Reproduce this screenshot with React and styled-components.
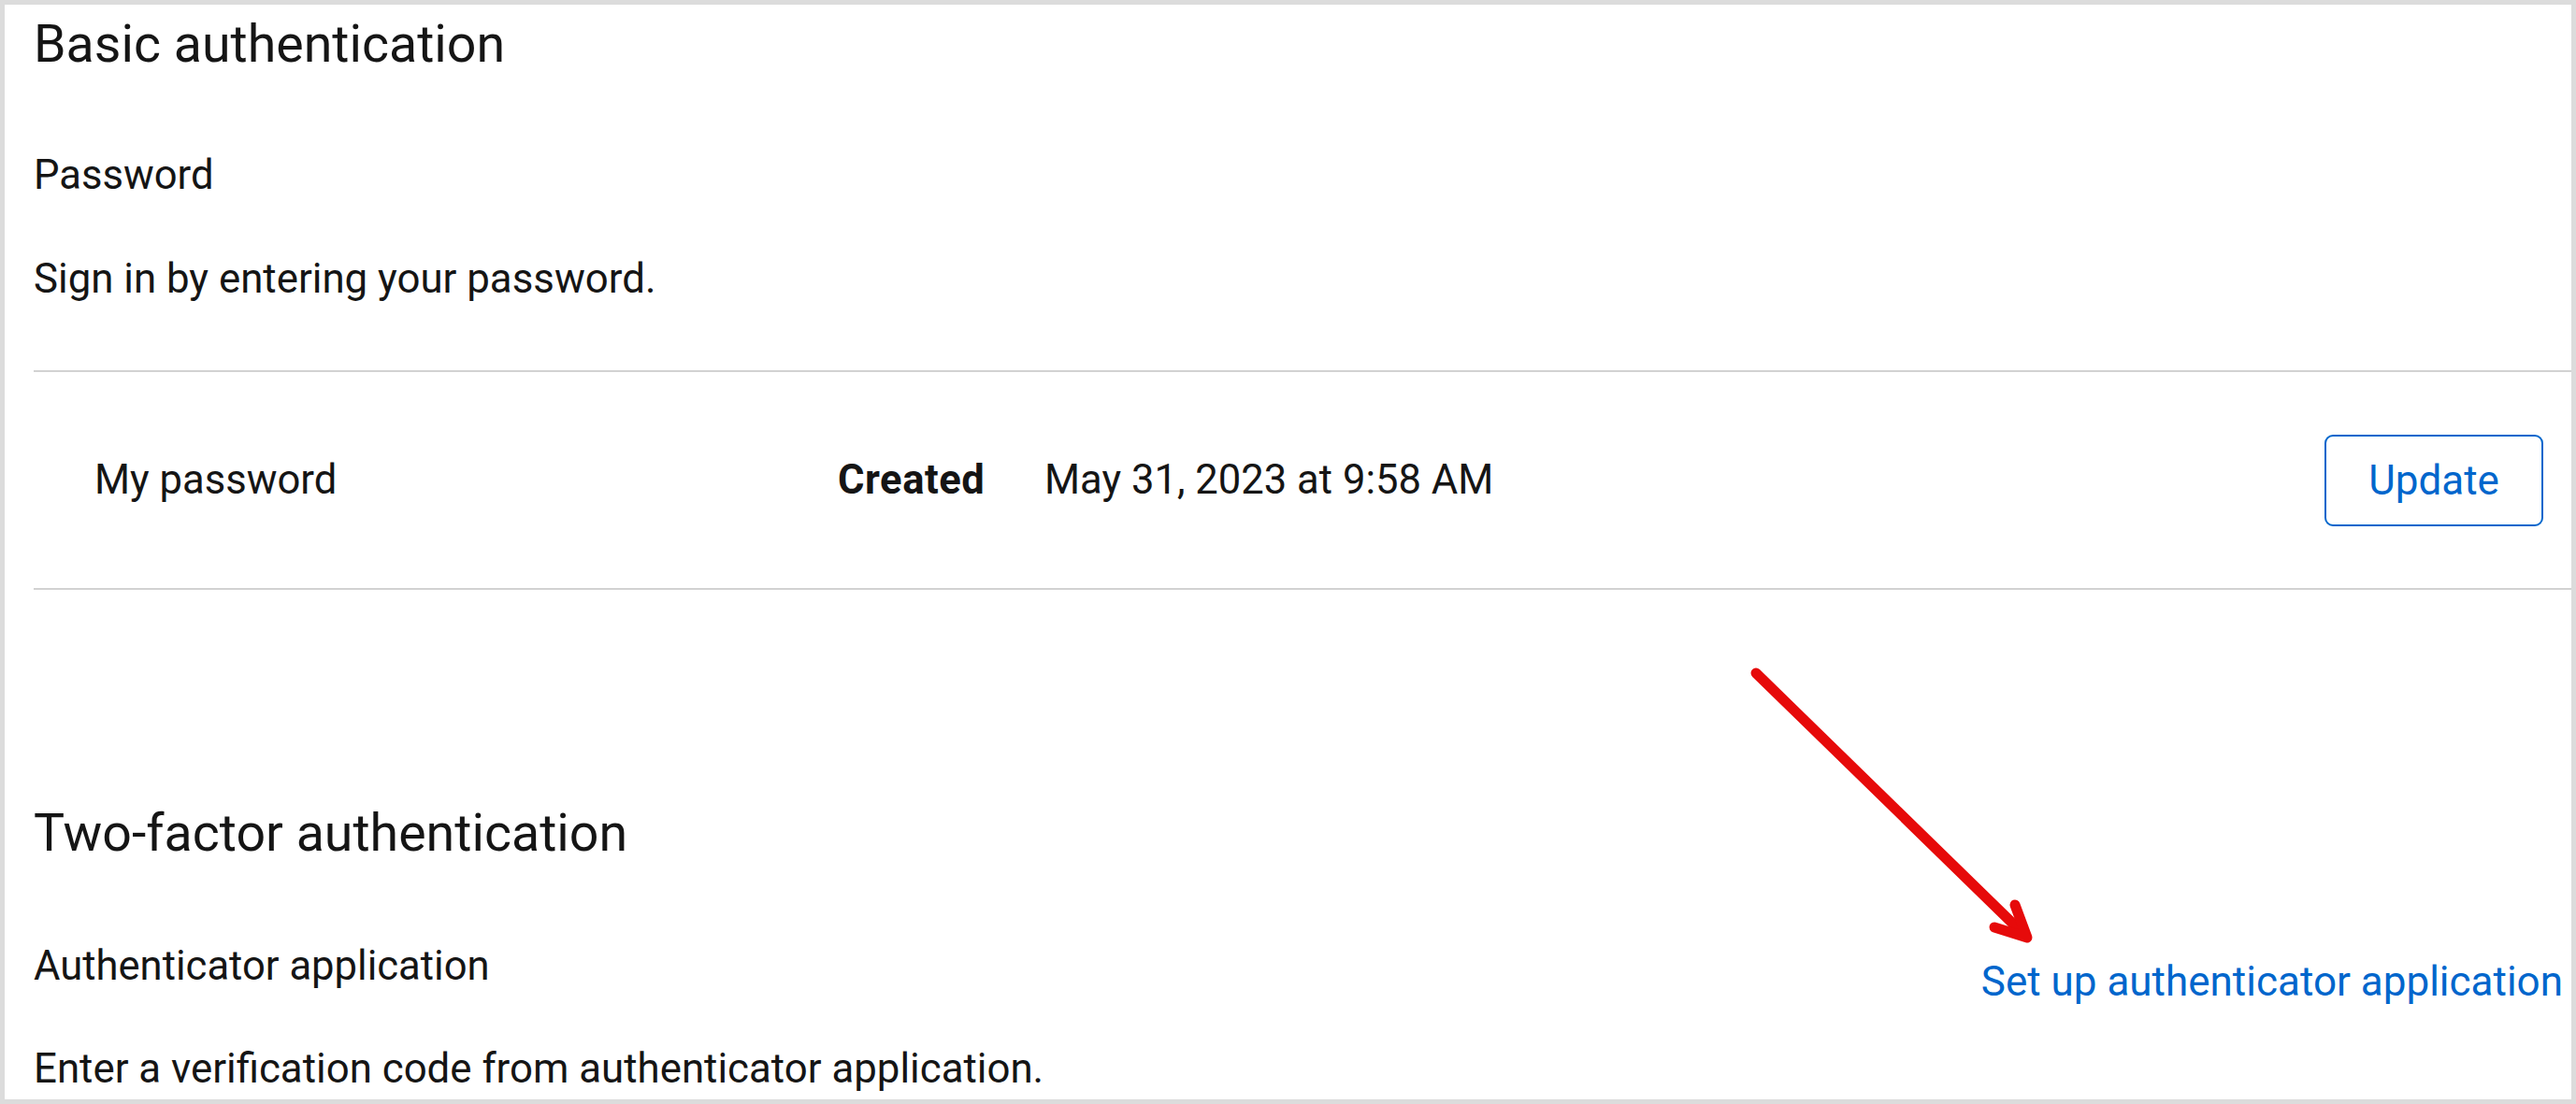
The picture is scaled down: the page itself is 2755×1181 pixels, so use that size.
import React from 'react';
import styled, { createGlobalStyle } from 'styled-components';

const GlobalStyle = createGlobalStyle`
  html, body {
    margin: 0;
    padding: 0;
    background: #ffffff;
  }
  body {
    font-family: Roboto, "Liberation Sans", sans-serif;
    color: #151515;
  }
`;

const Page = styled.div`
  position: relative;
  box-sizing: border-box;
  width: 2755px;
  height: 1181px;
  border: 5px solid #dcdcdc;
  background: #ffffff;
  overflow: hidden;
  padding: 10px 0 0 31px;
`;

const Section = styled.section`
  margin-top: ${(p) => p.$top || 0}px;
`;

const SectionTitle = styled.h1`
  margin: 0;
  font-size: 55.5px;
  line-height: 66px;
  font-weight: 400;
`;

const ItemTitle = styled.h3`
  margin: ${(p) => p.$top || 0}px 0 0;
  font-size: 43.6px;
  line-height: 65px;
  font-weight: 400;
`;

const Description = styled.p`
  margin: ${(p) => p.$top || 0}px 0 0;
  font-size: 43.8px;
  line-height: 65px;
`;

const CredentialList = styled.div`
  margin-top: 65px;
  border-top: 2px solid #d2d2d2;
  border-bottom: 2px solid #d2d2d2;
`;

const CredentialRow = styled.div`
  display: grid;
  grid-template-columns: 795px 221px 1fr auto;
  align-items: center;
  min-height: 231px;
  padding: 0 30px 0 65px;
  font-size: 43.6px;
  line-height: 65px;
`;

const MetaLabel = styled.span`
  font-weight: 700;
  letter-spacing: 0.5px;
`;

const OutlineButton = styled.button`
  box-sizing: border-box;
  width: 234px;
  height: 98px;
  border: 2px solid #0066cc;
  border-radius: 9px;
  background: #ffffff;
  color: #0066cc;
  font-family: inherit;
  font-size: 44px;
  line-height: 1;
  padding: 0;
`;

const Split = styled.div`
  display: flex;
  justify-content: space-between;
  align-items: flex-start;
  margin-top: 76px;
`;

const LinkButton = styled.a`
  padding: 17px 9px 0 0;
  font-size: 44px;
  line-height: 65px;
  color: #0066cc;
  text-decoration: none;
  white-space: nowrap;
`;

const Annotation = styled.svg`
  position: absolute;
  left: 0;
  top: 0;
  pointer-events: none;
`;

export default function App() {
  return (
    <>
      <GlobalStyle />
      <Page>
        <Section>
          <SectionTitle>Basic authentication</SectionTitle>
          <ItemTitle $top={74}>Password</ItemTitle>
          <Description $top={46}>Sign in by entering your password.</Description>
          <CredentialList>
            <CredentialRow>
              <span>My password</span>
              <MetaLabel>Created</MetaLabel>
              <span>May 31, 2023 at 9:58 AM</span>
              <OutlineButton>Update</OutlineButton>
            </CredentialRow>
          </CredentialList>
        </Section>

        <Section $top={228}>
          <SectionTitle>Two-factor authentication</SectionTitle>
          <Split>
            <div>
              <ItemTitle>Authenticator application</ItemTitle>
              <Description $top={45}>
                Enter a verification code from authenticator application.
              </Description>
            </div>
            <LinkButton href="#">Set up authenticator application</LinkButton>
          </Split>
        </Section>

        {/* red callout arrow drawn over the page */}
        <Annotation width="2755" height="1181" viewBox="0 0 2755 1181">
          <g
            stroke="#e60a0a"
            strokeWidth="11"
            strokeLinecap="round"
            strokeLinejoin="round"
            fill="none"
          >
            <line x1="1873" y1="715" x2="2158" y2="993" />
            <polyline points="2150,963 2163,998 2128,987" />
          </g>
        </Annotation>
      </Page>
    </>
  );
}
